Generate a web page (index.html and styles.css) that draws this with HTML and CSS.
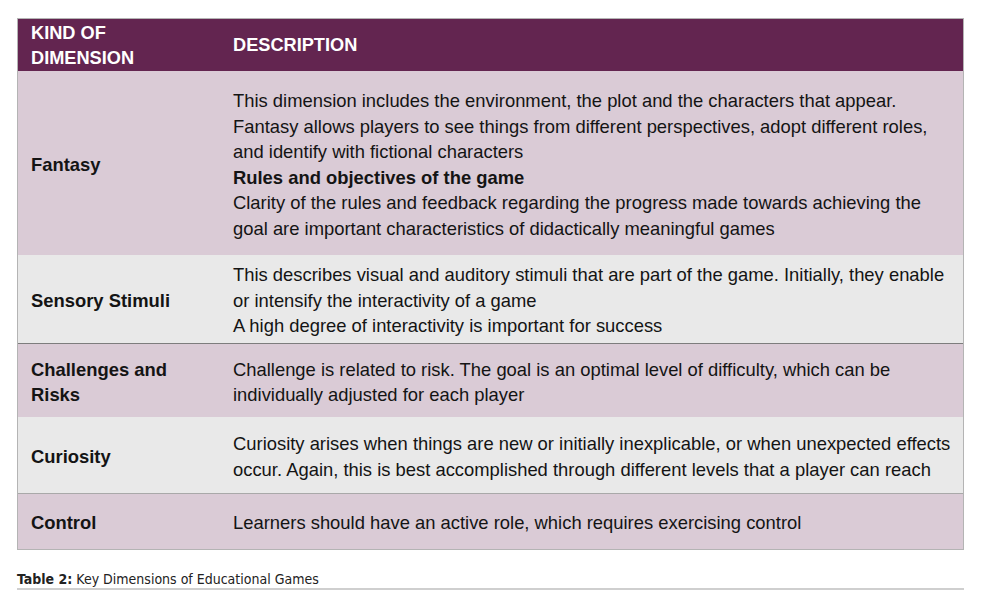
FILE: index.html
```html
<!DOCTYPE html>
<html lang="en">
<head>
<meta charset="utf-8">
<title>Key Dimensions of Educational Games</title>
<link rel="stylesheet" href="styles.css">
</head>
<body>
<div class="wrap">
  <div class="dims" role="table">
    <div class="row head" role="row">
      <div class="cell c1" role="columnheader">KIND OF<br>DIMENSION</div>
      <div class="cell c2" role="columnheader">DESCRIPTION</div>
    </div>
    <div class="row lav r-fantasy" role="row">
      <div class="cell c1" role="cell">Fantasy</div>
      <div class="cell c2" role="cell">This dimension includes the environment, the plot and the characters that appear.<br>Fantasy allows players to see things from different perspectives, adopt different roles,<br>and identify with fictional characters<br><strong>Rules and objectives of the game</strong><br>Clarity of the rules and feedback regarding the progress made towards achieving the<br>goal are important characteristics of didactically meaningful games</div>
    </div>
    <div class="row gray r-sensory" role="row">
      <div class="cell c1" role="cell">Sensory Stimuli</div>
      <div class="cell c2" role="cell">This describes visual and auditory stimuli that are part of the game. Initially, they enable<br>or intensify the interactivity of a game<br>A high degree of interactivity is important for success</div>
    </div>
    <div class="row lav r-challenge" role="row">
      <div class="cell c1" role="cell">Challenges and<br>Risks</div>
      <div class="cell c2" role="cell">Challenge is related to risk. The goal is an optimal level of difficulty, which can be<br>individually adjusted for each player</div>
    </div>
    <div class="row gray r-curiosity" role="row">
      <div class="cell c1" role="cell">Curiosity</div>
      <div class="cell c2" role="cell">Curiosity arises when things are new or initially inexplicable, or when unexpected effects<br>occur. Again, this is best accomplished through different levels that a player can reach</div>
    </div>
    <div class="row lav r-control" role="row">
      <div class="cell c1" role="cell">Control</div>
      <div class="cell c2" role="cell">Learners should have an active role, which requires exercising control</div>
    </div>
  </div>
  <p class="caption"><b>Table 2:</b> Key Dimensions of Educational Games</p>
</div>
</body>
</html>
```

FILE: styles.css
```css
html, body {
  margin: 0;
  padding: 0;
  background: #ffffff;
}

.wrap {
  padding: 18px 0 0 17px;
  width: 947px;
}

.dims {
  box-sizing: border-box;
  width: 947px;
  border: 1px solid #b4b4b4;
  font-family: "Liberation Sans", Arial, sans-serif;
  font-size: 18.4px;
  line-height: 25.5px;
  color: #141414;
}

.row {
  box-sizing: border-box;
  display: grid;
  grid-template-columns: 202px 1fr;
  align-items: center;
}

.cell {
  padding: 3px 0 0 13px;
  white-space: nowrap;
}

.c1 {
  font-weight: bold;
}

.head {
  height: 52px;
  background: #632550;
  color: #ffffff;
  font-size: 18.2px;
  line-height: 25px;
  font-weight: bold;
}

.head .cell {
  padding-top: 1px;
}

.lav {
  background: #dacbd6;
}

.gray {
  background: #e9e9e9;
}

.r-fantasy {
  height: 184px;
}

.r-sensory {
  height: 89px;
  border-bottom: 1px solid #7d7d7d;
}

.r-challenge {
  height: 73px;
}

.r-curiosity {
  height: 77px;
  border-bottom: 1px solid #a9a9a9;
}

.r-control {
  height: 55px;
}

.caption {
  margin: 20px 0 0 0;
  padding-bottom: 0;
  border-bottom: 2px solid #cfcfcf;
  font-family: "DejaVu Sans Condensed", "Roboto", sans-serif;
  font-size: 14px;
  line-height: 18px;
  color: #222222;
}

.caption b {
  font-weight: bold;
}
```
